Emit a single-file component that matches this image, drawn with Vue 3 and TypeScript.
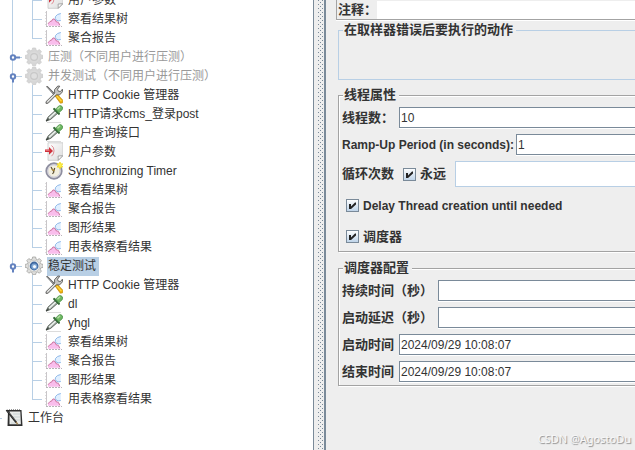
<script setup lang="ts">
import { computed, ref } from 'vue'

type IconName = 'params' | 'chart' | 'gear-off' | 'gear' | 'tools' | 'pipette' | 'clock' | 'notebook'

interface TreeNode {
  label: string
  icon: IconName
  level: number
  disabled?: boolean
  selected?: boolean
  handle?: 'open' | 'closed'
}

const nodes: TreeNode[] = [
  { label: '用户参数', icon: 'params', level: 2 },
  { label: '察看结果树', icon: 'chart', level: 2 },
  { label: '聚合报告', icon: 'chart', level: 2 },
  { label: '压测（不同用户进行压测）', icon: 'gear-off', level: 1, disabled: true, handle: 'closed' },
  { label: '并发测试（不同用户进行压测）', icon: 'gear-off', level: 1, disabled: true, handle: 'open' },
  { label: 'HTTP Cookie 管理器', icon: 'tools', level: 2 },
  { label: 'HTTP请求cms_登录post', icon: 'pipette', level: 2 },
  { label: '用户查询接口', icon: 'pipette', level: 2 },
  { label: '用户参数', icon: 'params', level: 2 },
  { label: 'Synchronizing Timer', icon: 'clock', level: 2 },
  { label: '察看结果树', icon: 'chart', level: 2 },
  { label: '聚合报告', icon: 'chart', level: 2 },
  { label: '图形结果', icon: 'chart', level: 2 },
  { label: '用表格察看结果', icon: 'chart', level: 2 },
  { label: '稳定测试', icon: 'gear', level: 1, selected: true, handle: 'open' },
  { label: 'HTTP Cookie 管理器', icon: 'tools', level: 2 },
  { label: 'dl', icon: 'pipette', level: 2 },
  { label: 'yhgl', icon: 'pipette', level: 2 },
  { label: '察看结果树', icon: 'chart', level: 2 },
  { label: '聚合报告', icon: 'chart', level: 2 },
  { label: '图形结果', icon: 'chart', level: 2 },
  { label: '用表格察看结果', icon: 'chart', level: 2 },
  { label: '工作台', icon: 'notebook', level: 0 },
]

const gutterWidths = [5, 25, 45]

// Adds the connector lines of each row: how far the outer and inner trunks reach.
const rows = computed(() => {
  const lastGroup = nodes.map((n) => n.level).lastIndexOf(1)
  return nodes.map((node, i) => ({
    ...node,
    gutter: gutterWidths[node.level],
    outer: node.level === 0 || i > lastGroup ? 0 : i === lastGroup ? 10 : 19,
    inner: node.level !== 2 ? 0 : nodes[i + 1]?.level === 2 ? 19 : 11,
  }))
})

const comment = ref('')
const threads = ref('10')
const rampUp = ref('1')
const forever = ref(true)
const loops = ref('')
const delayCreation = ref(true)
const scheduler = ref(true)
const duration = ref('')
const startupDelay = ref('')
const startTime = ref('2024/09/29 10:08:07')
const endTime = ref('2024/09/29 10:08:07')
</script>

<template>
  <main class="window">
    <svg class="defs" aria-hidden="true">
      <defs>
        <linearGradient id="box-fill" x1="0" y1="0" x2="0" y2="1">
          <stop offset="0" stop-color="#ffffff" />
          <stop offset="1" stop-color="#bcd2e8" />
        </linearGradient>
        <linearGradient id="page-fill" x1="0" y1="0" x2="1" y2="1">
          <stop offset="0" stop-color="#ffffff" />
          <stop offset="1" stop-color="#dcdcdc" />
        </linearGradient>
        <path
          id="cog"
          d="M7.6 1h3l.5 2.2 1.3.6L14.400 2.600l2 2-1.200 2 .6 1.300 2.200.5v3l-2.200.5-.6 1.300 1.200 2-2 2-2-1.200-1.300.6-.5 2.100h-3l-.5-2.100-1.300-.6-2 1.200-2-2 1.200-2-.6-1.300L.2 11.400v-3l2.200-.5.6-1.300-1.200-2 2-2 2 1.200 1.300-.6z"
        />
      </defs>
      <symbol id="gear-off" viewBox="0 0 18 19">
        <use href="#cog" fill="#d6d6d6" stroke="#cacaca" stroke-width=".7" />
        <circle cx="9.100" cy="10" r="5.500" fill="#dadada" />
        <circle cx="9.100" cy="10" r="4" fill="#c8c8c8" />
        <circle cx="9.100" cy="10" r="2.800" fill="#dfdfdf" />
      </symbol>
      <symbol id="gear" viewBox="0 0 18 19">
        <use href="#cog" fill="#dededc" stroke="#a2a29f" stroke-width=".8" />
        <circle cx="9.100" cy="10" r="5.700" fill="#f1f1ef" stroke="#b7b7b3" stroke-width=".6" />
        <circle cx="9.100" cy="10" r="4.400" fill="#3f689f" />
        <circle cx="9.300" cy="10.400" r="3" fill="#7ea6d4" />
        <circle cx="9.500" cy="10.600" r="1.600" fill="#f5faff" />
      </symbol>
      <symbol id="chart" viewBox="0 0 18 19">
        <path d="M1.500 2v16" fill="none" stroke="#c9c6c9" />
        <path d="M0 3.500h1M0 6.500h1M0 9.500h1M0 12.500h1M0 15.500h1" stroke="#dedede" />
        <path d="M1 17.500h16" stroke="#b9b3b9" stroke-dasharray="2 1" />
        <path d="M15.800 4.200Q12 5 10.400 7.500q-.8 2 .6 3.500 2 1.500 4.800.5z" fill="#e0efff" />
        <path d="M15.800 4.500Q12 5 10.500 7.500q-.8 2 .6 3.500 2 1.500 4.700.5" fill="none" stroke="#8fb8e8" />
        <path d="M3 16.800v-2.300l3-3 2-2 2.500 1.500 1.500 2 2 .5 1.500 3.300z" fill="#f9bdec" />
        <path d="M3 14.800l2-2.300 1.500-.3L8 9.900l2 .6L11 12.700l2.300.6 1.500 2.900" fill="none" stroke="#cc7aa2" />
      </symbol>
      <symbol id="pipette" viewBox="0 0 18 19">
        <path d="M2 18.500h14" stroke="#dcdcdc" />
        <path d="M1.200 17L3 13.200l7.200-6.700 2.600 2.600-7.300 6.400z" fill="#a9b3ab" stroke="#4c554e" stroke-width=".9" />
        <path d="M4 14.300l6.700-6.200" stroke="#f0f5f1" stroke-width="1.300" />
        <path d="M1.200 17.200l2.500-2.500" stroke="#3d443f" stroke-width="1.200" />
        <path d="M9.200 5l4.700 4.800" stroke="#356b39" stroke-width="2.200" stroke-linecap="round" />
        <path d="M10.700 5.200l2.800-3q1.800-1.400 3.500.2 1.500 1.700 0 3.500l-3.200 2.800z" fill="#6cb661" stroke="#4c944a" stroke-width=".8" />
        <path d="M12.500 5.300l2.600-2.500" stroke="#b9dfa9" stroke-width="1.300" />
      </symbol>
      <symbol id="tools" viewBox="0 0 18 19">
        <path d="M1 1.500L2.500 1l9 9-1.700 1.300z" fill="#555" />
        <path d="M1.500 1.300l8.800 8.900" stroke="#999" />
        <path d="M10 10.800l2-1.800 5.900 6.300-.3 2.500-2.200.4z" fill="#f3b60d" stroke="#b98108" stroke-width=".7" />
        <path d="M11.800 11l4.500 5" stroke="#ffe265" />
        <path d="M1 16.700l8.700-8.500-.2-3.500L12.800 1l2 .2-2.300 3 .8 2 2.200.3 1.900-2.300.2 2.500-3 3.200-3.200-.1L3.200 18.200 1 18.400z" fill="#c4c4c2" stroke="#5a5a59" stroke-width=".9" />
        <path d="M2.300 16.800l8.500-8.300" stroke="#f4f4f2" stroke-width=".9" />
      </symbol>
      <symbol id="params" viewBox="0 0 18 19">
        <path d="M3 .8h15v13L13.500 18.300H3z" fill="url(#page-fill)" stroke="#c6c6c6" stroke-width=".8" />
        <path d="M17.800 13.700l-4.700.3.2 4.300z" fill="#fafafa" stroke="#8b8b8b" stroke-width=".7" />
        <path d="M0 7.400h4V5l4 3.900L4 12.700V10.100H0z" fill="#ce313b" />
        <path d="M6.500 3.500Q9 5 9 8.700t-2.500 5.500" fill="none" stroke="#e08a91" />
        <path d="M.5 8.300h4" stroke="#ef7c82" />
      </symbol>
      <symbol id="clock" viewBox="0 0 18 19">
        <circle cx="9" cy="10" r="7.700" fill="#f3efdf" stroke="#8e8ea0" stroke-width="1.900" />
        <circle cx="9" cy="10" r="6.200" fill="none" stroke="#c9c9dc" />
        <path d="M6 6l2.700 4.500 1-3.500M9.200 10.500L7.500 13" fill="none" stroke="#5e5132" stroke-width="1.200" />
        <path d="M9.500 9.500l-3-1" stroke="#c99e35" />
        <path d="M15 1l.8 2 2-.2-1.100 1.600 1.100 1.700-2-.2-.8 2-.9-2-2 .2 1.200-1.700-1.200-1.600 2 .2z" fill="#fff04a" stroke="#f0dd2c" stroke-width=".9" />
      </symbol>
      <symbol id="notebook" viewBox="0 0 18 19">
        <path d="M3 2h13.500l1 16H2.500z" fill="#303030" />
        <path d="M4.500 3.500h10.800l.6 12.700H4.500z" fill="#e9ebe9" />
        <path d="M4 1.500h12" stroke="#999" stroke-dasharray="1 1" />
        <path d="M8 6h7M8 9h7M8 12h7M6 15h5" stroke="#bdc8cf" stroke-width=".7" />
        <path d="M1.500 2l9.800 12.500" stroke="#202020" stroke-width="2" />
        <path d="M2.500 3l8.500 10.500" stroke="#888" stroke-width=".5" />
        <path d="M11 14l1.800 2.300" stroke="#9a7b4a" stroke-width="1.300" />
      </symbol>
    </svg>

    <nav class="tree-pane">
      <ul class="tree" role="tree">
        <li
          v-for="(row, i) in rows"
          :key="i"
          class="row"
          role="treeitem"
          :aria-level="row.level + 1"
          :aria-selected="!!row.selected"
        >
          <svg class="gutter" :width="row.gutter" height="19" aria-hidden="true">
            <rect v-if="row.outer" class="line" x="12" y="0" width="1" :height="row.outer" />
            <rect v-if="row.inner" class="line" x="32" y="0" width="1" :height="row.inner" />
            <rect v-if="row.level === 2" class="line" x="33" y="10" width="9" height="1" />
            <rect v-if="row.level === 1" class="line" x="16" y="10" width="6" height="1" />
            <rect v-if="row.level === 0" class="line" x="0" y="10" width="2" height="1" />
            <template v-if="row.handle">
              <path v-if="row.handle === 'closed'" class="stem" d="M15 10.500h5" />
              <path v-else class="stem" d="M13 12.500v4" />
              <circle class="knob" cx="13" cy="10.500" r="2.200" />
            </template>
          </svg>
          <svg class="icon" width="18" height="19" aria-hidden="true"><use :href="'#' + row.icon" /></svg>
          <span class="label" :class="{ disabled: row.disabled, selected: row.selected }">{{ row.label }}</span>
        </li>
      </ul>
    </nav>

    <div class="divider" role="separator" aria-orientation="vertical">
      <svg width="5" height="100%" aria-hidden="true">
        <defs>
          <pattern id="bumps" width="4" height="4" patternUnits="userSpaceOnUse">
            <rect width="1" height="1" fill="#7a8a99" />
            <rect x="2" y="2" width="1" height="1" fill="#7a8a99" />
          </pattern>
        </defs>
        <rect width="5" height="100%" fill="url(#bumps)" />
      </svg>
    </div>

    <form class="editor" @submit.prevent>
      <div class="comment">
        <label for="comment">注释：</label>
        <input id="comment" v-model="comment" type="text" />
      </div>

      <fieldset class="group action">
        <legend>在取样器错误后要执行的动作</legend>
      </fieldset>

      <fieldset class="group etched threads">
        <legend>线程属性</legend>
        <div class="field">
          <label for="threads">线程数：</label>
          <input id="threads" v-model="threads" type="text" />
        </div>
        <div class="field ramp">
          <label class="latin" for="ramp">Ramp-Up Period (in seconds):</label>
          <input id="ramp" v-model="rampUp" type="text" />
        </div>
        <div class="field loop">
          <label for="loops">循环次数</label>
          <label class="check">
            <span class="box">
              <input v-model="forever" type="checkbox" />
              <svg viewBox="0 0 13 13" aria-hidden="true">
                <rect x=".5" y=".5" width="12" height="12" />
                <path v-if="forever" d="M3 5h2v2.500L9 3.500h1v2L5 10H3z" />
              </svg>
            </span>
            <span>永远</span>
          </label>
          <input id="loops" v-model="loops" type="text" :disabled="forever" />
        </div>
        <label class="check wide">
          <span class="box">
            <input v-model="delayCreation" type="checkbox" />
            <svg viewBox="0 0 13 13" aria-hidden="true">
              <rect x=".5" y=".5" width="12" height="12" />
              <path v-if="delayCreation" d="M3 5h2v2.500L9 3.500h1v2L5 10H3z" />
            </svg>
          </span>
          <span class="latin">Delay Thread creation until needed</span>
        </label>
        <label class="check wide">
          <span class="box">
            <input v-model="scheduler" type="checkbox" />
            <svg viewBox="0 0 13 13" aria-hidden="true">
              <rect x=".5" y=".5" width="12" height="12" />
              <path v-if="scheduler" d="M3 5h2v2.500L9 3.500h1v2L5 10H3z" />
            </svg>
          </span>
          <span>调度器</span>
        </label>
      </fieldset>

      <fieldset class="group etched schedule">
        <legend>调度器配置</legend>
        <div class="field">
          <label for="duration">持续时间（秒）</label>
          <input id="duration" v-model="duration" type="text" />
        </div>
        <div class="field">
          <label for="delay">启动延迟（秒）</label>
          <input id="delay" v-model="startupDelay" type="text" />
        </div>
        <div class="field">
          <label for="start">启动时间</label>
          <input id="start" v-model="startTime" type="text" />
        </div>
        <div class="field">
          <label for="end">结束时间</label>
          <input id="end" v-model="endTime" type="text" />
        </div>
      </fieldset>
    </form>

    <div class="watermark">CSDN @AgostoDu</div>
  </main>
</template>

<style>
body {
  background: #eee;
}
</style>

<style scoped>
.window {
  position: relative;
  display: flex;
  height: 100vh;
  overflow: hidden;
  color: #333;
  background: #eee;
  font: 12px/16px "Liberation Sans", "Noto Sans CJK SC", sans-serif;
}

.defs {
  position: absolute;
  width: 0;
  height: 0;
}

.tree-pane {
  flex: 0 0 313px;
  overflow: hidden;
  background: #fff;
}

/* The list is scrolled part of a row past the top. */
.tree {
  margin: -10px 0 0;
  padding: 0;
  list-style: none;
}

.row {
  display: flex;
  height: 19px;
}

.gutter,
.icon {
  flex: none;
  display: block;
}

.line {
  fill: #b8cfe5;
}

.stem {
  stroke: #6382bf;
  stroke-width: 2;
}

.knob {
  fill: #fff;
  stroke: #6382bf;
  stroke-width: 2;
}

.label {
  height: 19px;
  margin: 1px 0 0 4px;
  padding: 0 3px 0 1px;
  line-height: 19px;
  white-space: nowrap;
}

.label.disabled {
  color: #999;
}

.label.selected {
  background: #b8cfe5;
}

.divider {
  box-sizing: border-box;
  flex: 0 0 13px;
  padding-left: 4px;
  border-left: 1px solid #7a8a99;
  border-right: 2px solid #7a8a99;
}

.divider svg {
  display: block;
}

.editor {
  flex: 1;
  min-width: 0;
  margin-right: -4px;
  padding-left: 10px;
  font-size: 13px;
  font-weight: bold;
}

.comment {
  display: flex;
  align-items: center;
  height: 19px;
  padding-left: 1px;
  border: solid #a3a3a3;
  border-width: 0 0 1px 1px;
  box-shadow: 0 1px #fff;
}

.comment label {
  flex: 0 0 39px;
  white-space: nowrap;
}

input[type="text"] {
  box-sizing: border-box;
  flex: 1;
  min-width: 0;
  height: 21px;
  margin: 0;
  padding: 0 1px;
  border: 1px solid #7a8a99;
  border-radius: 0;
  outline: 0;
  color: #333;
  background: #fff;
  box-shadow: 0 1px #fff;
  font: 12px/16px "Liberation Sans", "Noto Sans CJK SC", sans-serif;
}

.comment input[type="text"] {
  height: 17px;
  border: 0;
}

.group {
  box-sizing: border-box;
  min-width: 0;
  margin: 0 0 0 2px;
  padding: 0 0 0 3px;
  border: 1px solid #b8cfe5;
}

.group legend {
  margin-left: 1px;
  padding: 0 3px 0 1px;
  background: #eee;
}

.etched {
  border-color: #a3a3a3;
  box-shadow: 1px 1px #fff, inset 1px 1px #fff;
}

.action {
  height: 58px;
  margin-top: 2px;
}

.threads {
  height: 165px;
  margin-top: 7px;
}

.schedule {
  margin-top: 8px;
  padding-bottom: 3px;
}

.field {
  display: flex;
  align-items: center;
  gap: 5px;
  margin-bottom: 6px;
}

.schedule .field:last-child {
  margin-bottom: 0;
}

.threads .field {
  margin-top: 4px;
}

.schedule .field:nth-of-type(1) {
  margin-top: 4px;
}

.field label {
  white-space: nowrap;
}

.latin {
  font-size: 12px;
}

.ramp {
  gap: 2px;
}

.threads .loop {
  gap: 9px;
  margin-bottom: 3px;
}

.loop input[type="text"] {
  height: 26px;
  border-color: #b8cfe5;
  box-shadow: none;
}

.check {
  display: flex;
  align-items: center;
  gap: 4px;
}

.check.wide {
  height: 31px;
  padding-left: 4px;
}

.box {
  display: grid;
  width: 13px;
  height: 13px;
}

.box > * {
  grid-area: 1 / 1;
  width: 13px;
  height: 13px;
  margin: 0;
}

.box input {
  appearance: none;
}

.box svg {
  pointer-events: none;
}

.box rect {
  fill: url(#box-fill);
  stroke: #7a8a99;
}

.box path {
  fill: #222;
}

.watermark {
  position: absolute;
  right: 4px;
  bottom: 3px;
  color: #f8f8f8;
  font: 11px/16px "Noto Sans", sans-serif;
  text-shadow: 1px 1px 1px #888;
  white-space: pre;
}
</style>
